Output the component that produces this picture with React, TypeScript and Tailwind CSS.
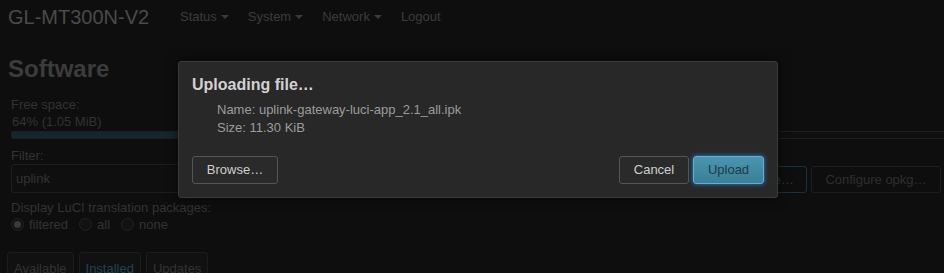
const navItems = [
  { label: "Status", caret: true },
  { label: "System", caret: true },
  { label: "Network", caret: true },
  { label: "Logout", caret: false },
];

function Radio({ label, checked }: { label: string; checked?: boolean }) {
  return (
    <label className="flex items-center gap-[5px] mr-[11px]">
      <span className="w-[13px] h-[13px] rounded-full border border-[#222] bg-[#121212] flex items-center justify-center">
        {checked && <span className="w-[7px] h-[7px] rounded-full bg-[#3a3a3a]" />}
      </span>
      <span>{label}</span>
    </label>
  );
}

function UploadModal() {
  return (
    <div className="absolute left-[178px] top-[61px] w-[600px] h-[137px] rounded-[3px] border border-[#3a3a3a] bg-[#282828] px-[13px] pt-[12px] shadow-[0_0_12px_rgba(0,0,0,0.6)]">
      <h4 className="text-[16px] font-bold leading-[22px] text-[#d2d2d2]">Uploading file…</h4>
      <div className="pl-[25px] pt-[5px] text-[13px] leading-[18px] text-[#9c9c9c]">
        <div>Name: uplink-gateway-luci-app_2.1_all.ipk</div>
        <div>Size: 11.30 KiB</div>
      </div>
      <div className="flex justify-between items-center mt-[19px]">
        <button className="h-[28px] w-[86px] rounded-[3px] border border-[#555] bg-[#2a2a2a] text-[13px] text-[#cfcfcf]">
          Browse…
        </button>
        <div className="flex gap-[4px]">
          <button className="h-[28px] w-[70px] rounded-[3px] border border-[#555] bg-[#2a2a2a] text-[13px] text-[#cfcfcf]">
            Cancel
          </button>
          <button className="h-[28px] w-[71px] rounded-[3px] border border-[#5eaee6] bg-gradient-to-b from-[#4a95ae] to-[#3b7f96] text-[13px] text-[#1c3b48] shadow-[0_0_5px_#2f7fc0]">
            Upload
          </button>
        </div>
      </div>
    </div>
  );
}

export default function App() {
  return (
    <div className="relative w-[944px] h-[273px] overflow-hidden bg-[#0e0e0e] font-['Liberation_Sans',Arial,sans-serif]">
      <header className="flex items-center h-[33px] pl-[8px]">
        <span className="w-[172px] text-[20px] text-[#4a4a4a]">GL-MT300N-V2</span>
        <nav className="flex text-[13px] text-[#3c3c3c]">
          {navItems.map((n) => (
            <span key={n.label} className="flex items-center mr-[19px]">
              {n.label}
              {n.caret && (
                <span className="ml-[4px] mt-[1px] w-0 h-0 border-l-[4px] border-r-[4px] border-t-[4px] border-l-transparent border-r-transparent border-t-[#3a3a3a]" />
              )}
            </span>
          ))}
        </nav>
      </header>

      <main className="pl-[8px] pt-[22px]">
        <h2 className="text-[24px] font-bold leading-[28px] text-[#3c3c3c]">Software</h2>

        <div className="pl-[3px] mt-[13px] text-[13px] leading-[17px] text-[#333]">
          <div>Free space:</div>
          <div className="pl-[1px]">64% (1.05 MiB)</div>
          <div className="mt-[1px] h-[8px] w-[1000px] border border-[#1e1e1e] rounded-[2px] bg-[#0f0f0f]">
            <div className="h-full w-[64%] bg-[#15262c]" />
          </div>

          <div className="mt-[8px]">Filter:</div>
          <div className="flex items-start justify-between pr-[3px]">
            <div className="h-[29px] w-[400px] border border-[#1e1e1e] rounded-[3px] bg-[#0f0f0f] flex items-center pl-[4px] text-[#333]">
              uplink
            </div>
            <div className="flex gap-[4px] mt-[2px]">
              <button className="h-[27px] px-[12px] whitespace-nowrap rounded-[3px] border border-[#16333d] text-[#1e3a44]">
                Upload Package…
              </button>
              <button className="h-[27px] w-[130px] whitespace-nowrap rounded-[3px] border border-[#1e1e1e] text-[#2e2e2e]">
                Configure opkg…
              </button>
            </div>
          </div>

          <div className="mt-[6px]">Display LuCI translation packages:</div>
          <div className="flex items-center">
            <Radio label="filtered" checked />
            <Radio label="all" />
            <Radio label="none" />
          </div>
        </div>

        <div className="flex gap-[5px] mt-[19px] -ml-[1px] text-[13px] leading-[17px]">
          <span className="px-[6px] pt-[7px] h-[30px] whitespace-nowrap border border-[#1c1c1c] rounded-[3px] bg-[#111] text-[#333]">Available</span>
          <span className="px-[6px] pt-[7px] h-[30px] whitespace-nowrap border border-[#1c1c1c] rounded-[3px] bg-[#111] text-[#1e4550]">Installed</span>
          <span className="px-[6px] pt-[7px] h-[30px] whitespace-nowrap border border-[#1c1c1c] rounded-[3px] bg-[#111] text-[#333]">Updates</span>
        </div>
      </main>

      <UploadModal />
    </div>
  );
}
